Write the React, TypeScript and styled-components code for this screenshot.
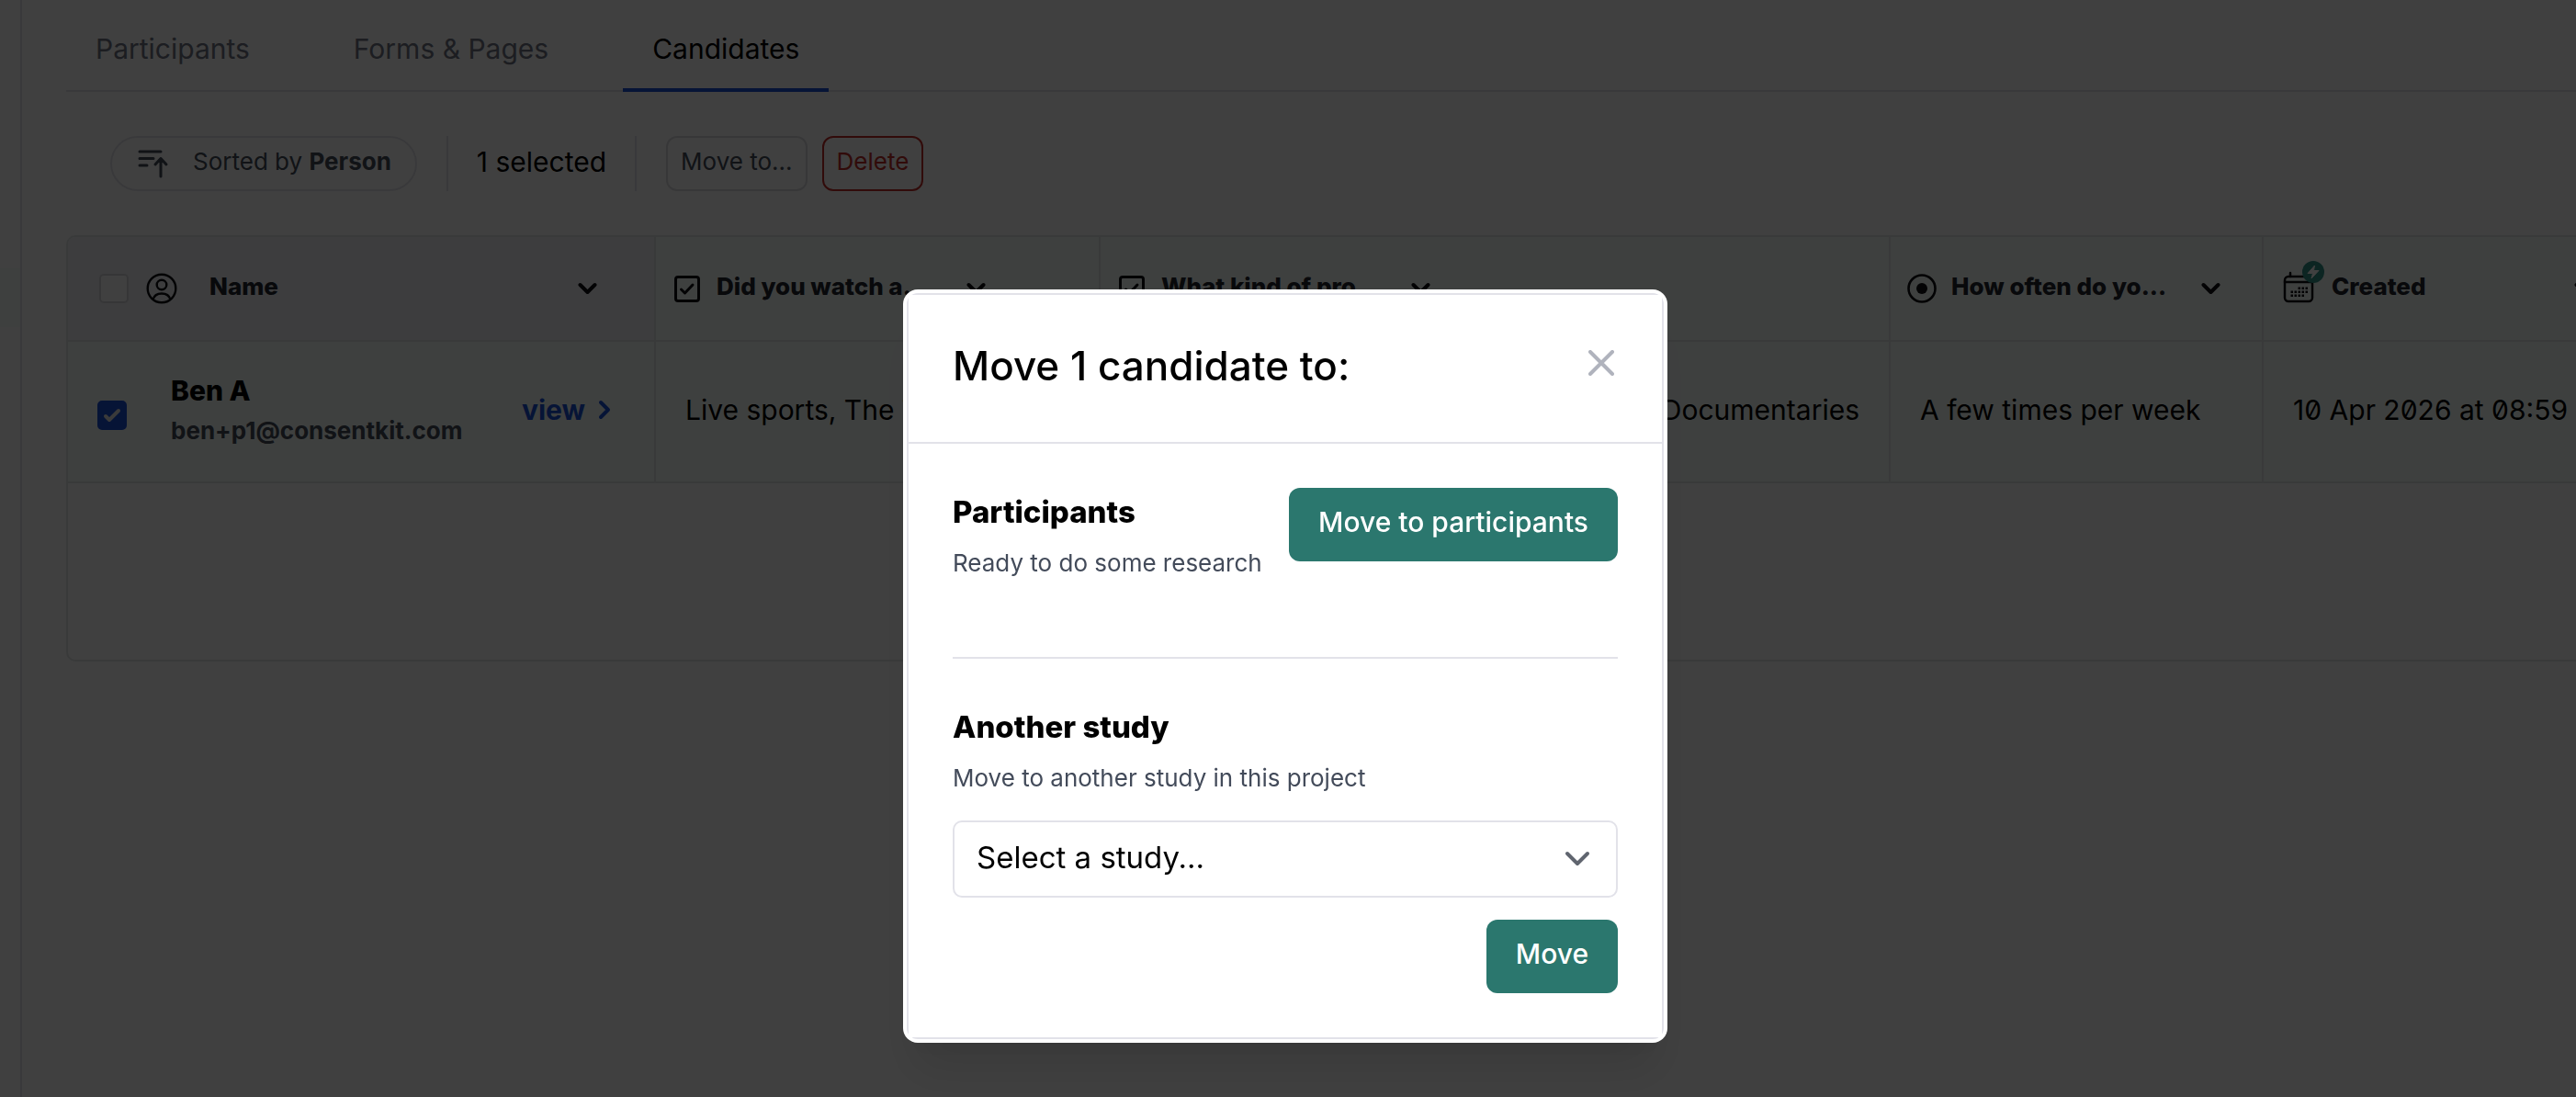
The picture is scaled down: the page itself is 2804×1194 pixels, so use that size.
import React from "react";
import styled, { createGlobalStyle } from "styled-components";

const color = {
  ink: "#000000",
  heading: "#22252f",
  body: "#434b5a",
  muted: "#6f7583",
  line: "#e4e4ea",
  tableLine: "#e4e8e8",
  mint: "#f8fffc",
  slate: "#f1f3f8",
  blue: "#1a4fd8",
  teal: "#2b776e",
  badge: "#319388",
  red: "#c42f2a",
};

const GlobalStyle = createGlobalStyle`
  *, *::before, *::after { box-sizing: border-box; }
  body {
    margin: 0;
    overflow: hidden;
    background: #fff;
    color: ${color.ink};
    font-family: Inter, "Liberation Sans", sans-serif;
    font-size: 30px;
    line-height: 40px;
  }
  button, input, select { font: inherit; color: inherit; }
  h1, h2, p { margin: 0; }
  svg { display: block; flex: none; }
`;

const Shell = styled.div`
  display: flex;
  min-height: 100vh;
`;

const Sidebar = styled.aside`
  flex: none;
  width: 24px;
  padding-top: 292px;
  border-right: 2px solid ${color.line};
`;

const SidebarItem = styled.div`
  height: 64px;
  background: ${color.mint};
`;

const Main = styled.main`
  flex: 1;
  min-width: 0;
  padding-left: 48px;
`;

const Tabs = styled.nav`
  display: flex;
  gap: 49px;
  height: 100px;
  border-bottom: 2px solid ${color.line};
`;

const Tab = styled.a<{ $active?: boolean }>`
  height: 100px;
  padding: 33px 32px 0;
  border-bottom: 4px solid ${(p) => (p.$active ? color.blue : "transparent")};
  color: ${(p) => (p.$active ? color.ink : color.muted)};
  text-decoration: none;
`;

const Toolbar = styled.div`
  display: flex;
  align-items: stretch;
  height: 60px;
  margin: 48px 0 48px 48px;
`;

const SortPill = styled.button`
  display: flex;
  align-items: center;
  gap: 26px;
  padding: 0 26px 4px 28px;
  border: 2px solid ${color.line};
  border-radius: 30px;
  background: #fff;
  color: ${color.body};
  font-size: 26px;
  svg { margin-top: 4px; }
`;

const Selected = styled.div`
  display: flex;
  align-items: center;
  margin: 0 32px;
  padding: 0 31px 4px;
  border-left: 2px solid ${color.line};
  border-right: 2px solid ${color.line};
`;

const SmallButton = styled.button<{ $danger?: boolean }>`
  margin-right: 16px;
  padding: 0 14px 4px;
  border: 2px solid ${(p) => (p.$danger ? color.red : "#dcdce0")};
  border-radius: 12px;
  background: #fff;
  color: ${(p) => (p.$danger ? color.red : color.body)};
  font-size: 26px;
`;

const TableFrame = styled.section`
  height: 464px;
  overflow: hidden;
  border: 2px solid ${color.tableLine};
  border-right: 0;
  border-radius: 10px 0 0 10px;
`;

const Table = styled.table`
  width: 2890px;
  table-layout: fixed;
  border-collapse: separate;
  border-spacing: 0;
`;

const HeadCell = styled.th<{ $first?: boolean }>`
  height: 114px;
  padding: 0 18px;
  border-right: 2px solid ${color.tableLine};
  border-bottom: 2px solid ${color.tableLine};
  background: ${(p) => (p.$first ? color.slate : color.mint)};
  color: ${color.heading};
  font-size: 26px;
  font-weight: 800;
  text-align: left;
`;

const HeadRow = styled.div`
  display: flex;
  align-items: center;
  gap: 32px;
`;

const ColumnTitle = styled.div<{ $gap?: number }>`
  display: flex;
  flex: none;
  align-items: center;
  gap: ${(p) => p.$gap ?? 16}px;
  width: 288px;
  white-space: nowrap;
`;

const NameHead = styled.div`
  display: flex;
  align-items: center;
  gap: 19px;
  padding: 0 44px 0 16px;
`;

const Label = styled.span<{ $indent?: boolean }>`
  flex: 1;
  padding-bottom: 4px;
  padding-left: ${(p) => (p.$indent ? 16 : 0)}px;
`;

const IconButton = styled.button`
  flex: none;
  padding: 0;
  border: 0;
  background: none;
`;

const Cell = styled.td<{ $end?: boolean }>`
  height: 154px;
  padding: 0 32px 4px;
  overflow: hidden;
  border-right: 2px solid ${color.tableLine};
  border-bottom: 2px solid ${color.tableLine};
  background: ${color.mint};
  font-feature-settings: "zero";
  text-align: ${(p) => (p.$end ? "right" : "left")};
  white-space: nowrap;
`;

const NameCell = styled.div`
  display: flex;
  align-items: center;
`;

const RowCheck = styled.div`
  padding-top: 12px;
`;

const Person = styled.div`
  flex: 1;
  margin-left: 48px;
  padding-top: 2px;
  font-weight: 800;
`;

const Email = styled.div`
  padding-top: 4px;
  color: ${color.body};
  font-size: 26px;
  font-weight: 700;
`;

const ViewLink = styled.a`
  display: flex;
  align-items: center;
  gap: 14px;
  padding-right: 14px;
  color: ${color.blue};
  font-weight: 700;
  text-decoration: none;
`;

const CheckBox = styled.span`
  display: grid;
  flex: none;
  width: 32px;
  height: 32px;
  > * { grid-area: 1 / 1; }
`;

const CheckInput = styled.input`
  width: 32px;
  height: 32px;
  margin: 0;
  appearance: none;
  border: 2px solid #d8d8dc;
  border-radius: 5px;
  background: #fff;
  &:checked { border-color: ${color.blue}; background: ${color.blue}; }
`;

const Overlay = styled.div`
  position: fixed;
  inset: 0;
  display: flex;
  align-items: flex-start;
  justify-content: center;
  padding: 315px 6px 0 0;
  background: rgba(0, 0, 0, 0.75);
`;

const Dialog = styled.div`
  width: 832px;
  padding: 4px;
  border-radius: 16px;
  background: #fff;
  box-shadow: 0 40px 50px -10px rgba(0, 0, 0, 0.1), 0 20px 20px -10px rgba(0, 0, 0, 0.04);
`;

const DialogClip = styled.div`
  overflow: hidden;
  border-radius: 12px;
`;

const DialogInner = styled.div`
  border: 2px solid #e2e2e9;
`;

const DialogHeader = styled.header`
  display: flex;
  align-items: center;
  justify-content: space-between;
  height: 162px;
  padding: 0 48px 6px;
  border-bottom: 2px solid #e2e2e9;
`;

const DialogTitle = styled.h1`
  font-size: 44px;
  font-weight: 500;
  line-height: 56px;
`;

const CloseButton = styled(IconButton)`
  padding: 0 4px 6px;
  color: #b0b3bd;
`;

const DialogBody = styled.div`
  padding: 48px;
`;

const MoveNow = styled.section`
  display: flex;
  align-items: flex-start;
  justify-content: space-between;
  margin-bottom: 48px;
  padding-bottom: 80px;
  border-bottom: 2px solid #e2e2e9;
`;

const SectionTitle = styled.h2`
  font-size: 33px;
  font-weight: 800;
  line-height: 52px;
`;

const Hint = styled.p`
  padding-top: 8px;
  color: #434b5a;
  font-size: 26px;
  line-height: 44px;
`;

const PrimaryButton = styled.button`
  height: 80px;
  padding: 0 32px 6px;
  border: 0;
  border-radius: 12px;
  background: ${color.teal};
  color: #fff;
  font-size: 30px;
  font-weight: 500;
`;

const StudyForm = styled.form`
  display: flex;
  flex-direction: column;
  align-items: flex-end;
  gap: 24px;
  margin-top: 24px;
`;

const SelectBox = styled.div`
  display: grid;
  align-items: center;
  width: 100%;
  > * { grid-area: 1 / 1; }
  > svg { justify-self: end; margin-right: 30px; pointer-events: none; }
`;

const Select = styled.select`
  width: 100%;
  height: 84px;
  padding: 0 80px 4px 24px;
  appearance: none;
  border: 2px solid #e2e2e9;
  border-radius: 10px;
  background: #fff;
  color: #000;
  font-size: 33px;
`;

const ChevronDown = () => (
  <svg width="21" height="14" viewBox="0 0 21 14" fill="none" stroke="#0c0d10" strokeWidth="4" strokeLinecap="round" strokeLinejoin="round">
    <path d="M2.5 3 10.5 11 18.5 3" />
  </svg>
);

const SortIcon = () => (
  <svg width="34" height="32" viewBox="0 0 34 32" fill="none" stroke="currentColor" strokeWidth="3" strokeLinecap="round" strokeLinejoin="round">
    <path d="M2 3H25M2 10.500H17M2 18H10M25 30V10.500M19 17 25 10.500 31 17" />
  </svg>
);

const PersonIcon = () => (
  <svg width="34" height="34" viewBox="0 0 34 34" fill="none" stroke="#0c0d10" strokeWidth="2.400">
    <circle cx="17" cy="17" r="15.300" />
    <circle cx="17" cy="13" r="5.300" />
    <path d="M7.500 29C9 23.800 13 22.500 17 22.500S25 23.800 26.500 29" />
  </svg>
);

const TickSquareIcon = () => (
  <svg width="32" height="32" viewBox="0 0 32 32" fill="none" stroke="#0c0d10" strokeWidth="3" strokeLinecap="round" strokeLinejoin="round">
    <rect x="3.500" y="3.500" width="25" height="26" rx="2.500" />
    <path d="M9.500 17 13.500 21 22 12" />
  </svg>
);

const RadioIcon = () => (
  <svg width="32" height="32" viewBox="0 0 32 32">
    <circle cx="16" cy="16" r="14.500" fill="none" stroke="#0c0d10" strokeWidth="2.600" />
    <circle cx="16" cy="16" r="6" fill="#0c0d10" />
  </svg>
);

const dots: Array<[number, number]> = [
  [20, 29], [24, 29], [28, 29],
  [12, 33], [16, 33], [20, 33], [24, 33], [28, 33],
  [12, 37], [16, 37], [20, 37], [24, 37],
];

const CalendarIcon = () => (
  <svg width="48" height="60" viewBox="0 0 48 60" overflow="visible">
    <g fill="none" stroke="#0c0d10" strokeWidth="2.500" strokeLinecap="round">
      <rect x="5" y="17" width="30" height="27" rx="4" />
      <path d="M5 23H35M11 13V17" />
    </g>
    {dots.map(([x, y]) => (
      <rect key={`${x}-${y}`} x={x - 0.5} y={y - 0.5} width="2.500" height="2.500" fill="#0c0d10" />
    ))}
    <circle cx="36" cy="12" r="12" fill={color.badge} />
    <path d="M37.500 5 30 13.500H35.500L34 19 42 10.500H36.500Z" fill="#fff" stroke="#fff" strokeLinejoin="round" />
  </svg>
);

const ChevronRight = () => (
  <svg width="15" height="24" viewBox="0 0 15 24" fill="none" stroke="currentColor" strokeWidth="4" strokeLinecap="round" strokeLinejoin="round">
    <path d="M3 4 11 12 3 20" />
  </svg>
);

const CloseIcon = () => (
  <svg width="28" height="28" viewBox="0 0 28 28" fill="none" stroke="currentColor" strokeWidth="4" strokeLinecap="round">
    <path d="M2 2 26 26M26 2 2 26" />
  </svg>
);

const SelectChevron = () => (
  <svg width="28" height="18" viewBox="0 0 28 18" fill="none" stroke="#60656f" strokeWidth="4" strokeLinecap="round" strokeLinejoin="round">
    <path d="M3 3 14 14 25 3" />
  </svg>
);

function Check({ label, checked = false }: { label: string; checked?: boolean }) {
  return (
    <CheckBox>
      <CheckInput type="checkbox" aria-label={label} defaultChecked={checked} />
      {checked && (
        <svg width="32" height="32" viewBox="0 0 32 32" fill="none" stroke="#e6e6e6" strokeWidth="4" strokeLinecap="round" strokeLinejoin="round" pointerEvents="none">
          <path d="M9 17 13 21 23 11" />
        </svg>
      )}
    </CheckBox>
  );
}

const columns = [
  { title: "Did you watch a...", icon: <TickSquareIcon />, gap: 16 },
  { title: "What kind of pro...", icon: <TickSquareIcon />, gap: 16 },
  { title: "How often do yo...", icon: <RadioIcon />, gap: 16 },
  { title: "Created", icon: <CalendarIcon />, gap: 8 },
];

export default function App() {
  return (
    <>
      <GlobalStyle />
      <Shell>
        <Sidebar>
          <SidebarItem />
        </Sidebar>
        <Main>
          <Tabs>
            <Tab href="#participants">Participants</Tab>
            <Tab href="#forms">Forms &amp; Pages</Tab>
            <Tab href="#candidates" $active>Candidates</Tab>
          </Tabs>
          <Toolbar>
            <SortPill type="button">
              <SortIcon />
              <span>Sorted by <b>Person</b></span>
            </SortPill>
            <Selected>1 selected</Selected>
            <SmallButton type="button">Move to...</SmallButton>
            <SmallButton type="button" $danger>Delete</SmallButton>
          </Toolbar>
          <TableFrame>
            <Table>
              <colgroup>
                <col style={{ width: 640 }} />
                <col style={{ width: 484 }} />
                <col style={{ width: 860 }} />
                <col style={{ width: 406 }} />
                <col style={{ width: 500 }} />
              </colgroup>
              <thead>
                <tr>
                  <HeadCell $first>
                    <NameHead>
                      <Check label="Select all" />
                      <PersonIcon />
                      <Label $indent>Name</Label>
                      <IconButton type="button" aria-label="Name options"><ChevronDown /></IconButton>
                    </NameHead>
                  </HeadCell>
                  {columns.map((c) => (
                    <HeadCell key={c.title}>
                      <HeadRow>
                        <ColumnTitle $gap={c.gap}>
                          {c.icon}
                          <Label>{c.title}</Label>
                        </ColumnTitle>
                        <IconButton type="button" aria-label="Column options"><ChevronDown /></IconButton>
                      </HeadRow>
                    </HeadCell>
                  ))}
                </tr>
              </thead>
              <tbody>
                <tr>
                  <Cell>
                    <NameCell>
                      <RowCheck>
                        <Check label="Select Ben A" checked />
                      </RowCheck>
                      <Person>
                        <div>Ben A</div>
                        <Email>ben+p1@consentkit.com</Email>
                      </Person>
                      <ViewLink href="#view">view <ChevronRight /></ViewLink>
                    </NameCell>
                  </Cell>
                  <Cell>Live sports, The T</Cell>
                  <Cell $end>Documentaries</Cell>
                  <Cell>A few times per week</Cell>
                  <Cell>10 Apr 2026 at 08:59</Cell>
                </tr>
              </tbody>
            </Table>
          </TableFrame>
        </Main>
      </Shell>
      <Overlay>
        <Dialog role="dialog" aria-modal="true" aria-labelledby="move-title">
          <DialogClip>
            <DialogInner>
              <DialogHeader>
                <DialogTitle id="move-title">Move 1 candidate to:</DialogTitle>
                <CloseButton type="button" aria-label="Close"><CloseIcon /></CloseButton>
              </DialogHeader>
              <DialogBody>
                <MoveNow>
                  <div>
                    <SectionTitle>Participants</SectionTitle>
                    <Hint>Ready to do some research</Hint>
                  </div>
                  <PrimaryButton type="button">Move to participants</PrimaryButton>
                </MoveNow>
                <section>
                  <SectionTitle>Another study</SectionTitle>
                  <Hint id="study-hint">Move to another study in this project</Hint>
                  <StudyForm>
                    <SelectBox>
                      <Select aria-labelledby="study-hint" defaultValue="">
                        <option value="">Select a study...</option>
                      </Select>
                      <SelectChevron />
                    </SelectBox>
                    <PrimaryButton type="button">Move</PrimaryButton>
                  </StudyForm>
                </section>
              </DialogBody>
            </DialogInner>
          </DialogClip>
        </Dialog>
      </Overlay>
    </>
  );
}
